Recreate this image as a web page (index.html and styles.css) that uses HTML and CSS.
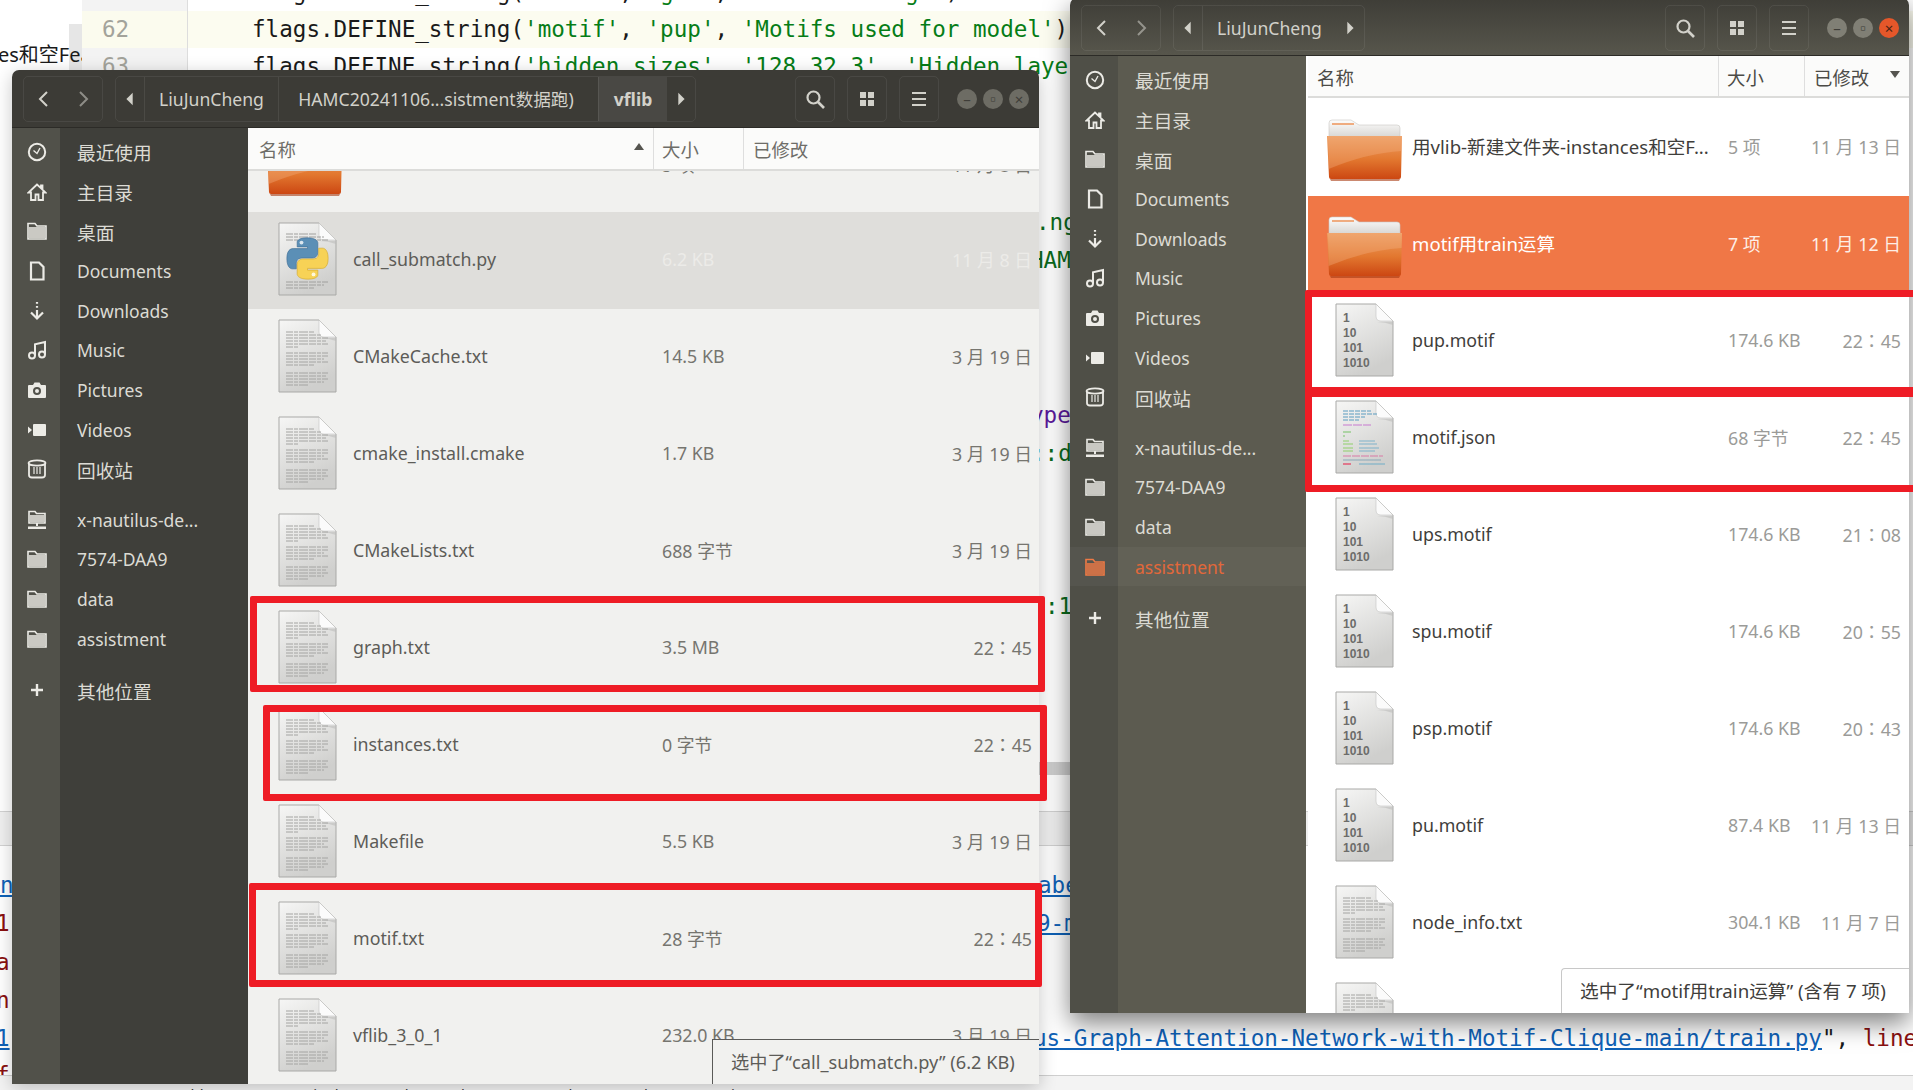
FILE: index.html
```html
<!DOCTYPE html>
<html>

<head>
  <title>Files</title>
  <link rel="stylesheet" href="styles.css">
</head>

<body>
  <svg class="defs" width="0" height="0">
    <defs>
      <linearGradient id="page" x1="0" y1="0" x2="0.4" y2="1">
        <stop offset="0" stop-color="#f6f6f5" />
        <stop offset="1" stop-color="#cfcfcd" />
      </linearGradient>
      <linearGradient id="orange" x1="0" y1="0" x2="0" y2="1">
        <stop offset="0" stop-color="#ee9f63" />
        <stop offset="0.55" stop-color="#e2772f" />
        <stop offset="1" stop-color="#cc4712" />
      </linearGradient>
      <linearGradient id="tab" x1="0" y1="0" x2="0" y2="1">
        <stop offset="0" stop-color="#fdfdfd" />
        <stop offset="1" stop-color="#d4d2ce" />
      </linearGradient>

      <symbol id="page-base" viewBox="0 0 59 74">
        <path d="M1 1H41L58 18V73H1Z" fill="url(#page)" stroke="#a9a9a7" />
        <path d="M41 1V13Q41 18 46 18H58Z" fill="#fbfbfb" stroke="#c4c4c2" stroke-width="0.6" />
        <path d="M42 19H58V22Q50 19 42 19Z" fill="#bdbdbb" opacity="0.6" />
      </symbol>
      <symbol id="f-text" viewBox="0 0 59 74">
        <use href="#page-base" width="59" height="74" />
        <path d="M8 13H36M8 16H44M8 19H50M8 22H48M8 25H50M8 28H20M8 34H50M8 37H50M8 40H46M8 43H50M8 46H36M8 54H50M8 57H48M8 60H50M8 63H46M8 66H30" stroke="#a4a4a2" stroke-width="1" stroke-dasharray="7 1 4 1 9 1" fill="none" />
      </symbol>
      <symbol id="f-python" viewBox="0 0 59 74">
        <use href="#page-base" width="59" height="74" />
        <path d="M8 12H38M8 15H46M8 18H50M8 60H50M8 63H46M8 66H36" stroke="#a0a09e" stroke-width="1" stroke-dasharray="7 1 4 1 9 1" fill="none" />
        <g transform="translate(8 15) scale(0.43)">
          <path d="M49 2C25 2 26 12 26 12V23H50V27H17C17 27 2 25 2 50C2 75 15 74 15 74H24V62C24 62 23 49 37 49H61C61 49 74 49 74 36V15C74 15 76 2 49 2Z" fill="#5b8fb6" stroke="#3f6f95" stroke-width="1.5" />
          <circle cx="36" cy="13" r="4.5" fill="#dbe6ee" />
          <g transform="rotate(180 50 50)">
            <path d="M49 2C25 2 26 12 26 12V23H50V27H17C17 27 2 25 2 50C2 75 15 74 15 74H24V62C24 62 23 49 37 49H61C61 49 74 49 74 36V15C74 15 76 2 49 2Z" fill="#f7d256" stroke="#d3a92c" stroke-width="1.5" />
            <circle cx="36" cy="13" r="4.5" fill="#fff8dc" />
          </g>
        </g>
      </symbol>
      <symbol id="f-binary" viewBox="0 0 59 74">
        <use href="#page-base" width="59" height="74" />
        <text class="bin" x="8" y="19">1</text>
        <text class="bin" x="8" y="34">10</text>
        <text class="bin" x="8" y="49">101</text>
        <text class="bin" x="8" y="64">1010</text>
      </symbol>
      <symbol id="f-json" viewBox="0 0 59 74">
        <use href="#page-base" width="59" height="74" />
        <path d="M8 11H36M8 14H42M8 17H30M8 20H24" stroke="#5a9cc0" stroke-width="1.2" stroke-dasharray="5 1" fill="none" />
        <path d="M8 25H36" stroke="#c77bd0" stroke-width="1.2" stroke-dasharray="9 1" fill="none" />
        <path d="M8 32H16M8 36H10" stroke="#76c266" stroke-width="1.2" fill="none" />
        <path d="M8 41H14M8 44H18M8 48H18M8 51H18" stroke="#8fcf6a" stroke-width="1.2" fill="none" />
        <path d="M24 41H40M24 44H42M24 48H44M24 51H40" stroke="#7fb2c9" stroke-width="1.2" fill="none" />
        <path d="M8 56H48" stroke="#d97aa5" stroke-width="1.2" stroke-dasharray="8 1" fill="none" />
        <path d="M8 60H46" stroke="#8aa8b8" stroke-width="1.2" fill="none" />
        <path d="M8 64H16" stroke="#e2506e" stroke-width="1.4" fill="none" />
        <path d="M24 64H50" stroke="#7fb2c9" stroke-width="1.2" fill="none" />
      </symbol>
      <symbol id="f-folder" viewBox="0 0 76 62">
        <path d="M2 4Q2 1 5 1H24L32 6H70Q73 6 73 9V20H2Z" fill="url(#tab)" stroke="#c9c7c3" stroke-width="0.6" />
        <path d="M5 5H27" stroke="#ee9a63" stroke-width="1.6" />
        <path d="M0 17H75L74 58Q74 60 72 60H4Q2 60 2 58Z" fill="url(#orange)" />
        <path d="M1 17H75L74.6 32Q40 34 1.6 50Z" fill="#f4b183" opacity="0.35" />
        <path d="M3 60H73L72 62H4Z" fill="#a83a10" opacity="0.6" />
      </symbol>

      <symbol id="i-clock" viewBox="0 0 20 20">
        <circle cx="10" cy="10" r="8.2" fill="none" stroke="currentColor" stroke-width="2" />
        <path d="M6.5 8.5L10 11.5L13 6" fill="none" stroke="currentColor" stroke-width="1.4" />
      </symbol>
      <symbol id="i-home" viewBox="0 0 20 20">
        <path d="M10 2.5L1.5 10.5H4V18H8.5V12.5H11.5V18H16V10.5H18.5L15.5 7.7V3.5H14V6.2Z" fill="none" stroke="currentColor" stroke-width="1.8" />
      </symbol>
      <symbol id="i-folder" viewBox="0 0 20 20">
        <path d="M1 2.5H8L10 5H19V18H1Z" fill="none" stroke="currentColor" stroke-width="1.6" />
        <rect x="2" y="6" width="16" height="11" fill="currentColor" opacity="0.78" />
      </symbol>
      <symbol id="i-doc" viewBox="0 0 20 20">
        <path d="M4 1.5H12L16.5 6V18.5H4Z" fill="none" stroke="currentColor" stroke-width="2.2" />
      </symbol>
      <symbol id="i-down" viewBox="0 0 20 20">
        <path d="M10 1V2.8M10 5V6.8M10 9V16" stroke="currentColor" stroke-width="2.2" fill="none" />
        <path d="M4 11.5L10 17.5L16 11.5" stroke="currentColor" stroke-width="2.2" fill="none" />
      </symbol>
      <symbol id="i-music" viewBox="0 0 20 20">
        <circle cx="5" cy="15.5" r="3" fill="none" stroke="currentColor" stroke-width="2" />
        <circle cx="15" cy="14.5" r="3" fill="none" stroke="currentColor" stroke-width="2" />
        <path d="M8 15.5V4.2L18 2V14.5" fill="none" stroke="currentColor" stroke-width="2" />
      </symbol>
      <symbol id="i-camera" viewBox="0 0 20 20">
        <path fill-rule="evenodd" d="M2 5H6L7.5 2.5H12.5L14 5H18Q19 5 19 6V17Q19 18 18 18H2Q1 18 1 17V6Q1 5 2 5ZM10 7A4 4 0 1 0 10 15A4 4 0 1 0 10 7ZM10 9A2 2 0 1 1 10 13A2 2 0 1 1 10 9Z" fill="currentColor" />
      </symbol>
      <symbol id="i-video" viewBox="0 0 20 20">
        <rect x="6" y="4" width="13" height="12" rx="1" fill="currentColor" />
        <path d="M1 6.5L5 10L1 13.5Z" fill="currentColor" />
      </symbol>
      <symbol id="i-trash" viewBox="0 0 20 20">
        <ellipse cx="10" cy="4" rx="8.5" ry="2.6" fill="none" stroke="currentColor" stroke-width="1.8" />
        <path d="M2 4.5V16Q2 18.5 5 18.5H15Q18 18.5 18 16V4.5" fill="none" stroke="currentColor" stroke-width="1.8" />
        <path d="M7 8V15M10 8V15M13 8V15" stroke="currentColor" stroke-width="1.2" fill="none" />
      </symbol>
      <symbol id="i-drive" viewBox="0 0 20 20">
        <path d="M2 1.5H8L9.5 3.5H18V13H2Z" fill="none" stroke="currentColor" stroke-width="1.6" />
        <rect x="3" y="5" width="14" height="7" fill="currentColor" opacity="0.78" />
        <path d="M10 13V16" stroke="currentColor" stroke-width="2" />
        <rect x="1" y="16.5" width="18" height="2.5" fill="currentColor" />
      </symbol>
      <symbol id="i-plus" viewBox="0 0 20 20">
        <path d="M10 4V16M4 10H16" stroke="currentColor" stroke-width="2.4" fill="none" />
      </symbol>
      <symbol id="i-back" viewBox="0 0 20 20">
        <path d="M13 3L6 10L13 17" stroke="currentColor" stroke-width="2" fill="none" />
      </symbol>
      <symbol id="i-next" viewBox="0 0 20 20">
        <path d="M7 3L14 10L7 17" stroke="currentColor" stroke-width="2" fill="none" />
      </symbol>
      <symbol id="i-tri-l" viewBox="0 0 20 20">
        <path d="M13 3V17L6 10Z" fill="currentColor" />
      </symbol>
      <symbol id="i-tri-r" viewBox="0 0 20 20">
        <path d="M7 3V17L14 10Z" fill="currentColor" />
      </symbol>
      <symbol id="i-search" viewBox="0 0 20 20">
        <circle cx="8.5" cy="8.5" r="6" fill="none" stroke="currentColor" stroke-width="2.2" />
        <path d="M13 13L19 19" stroke="currentColor" stroke-width="2.6" />
      </symbol>
      <symbol id="i-grid" viewBox="0 0 20 20">
        <path d="M3 3H9V9H3ZM11 3H17V9H11ZM3 11H9V17H3ZM11 11H17V17H11Z" fill="currentColor" />
      </symbol>
      <symbol id="i-menu" viewBox="0 0 20 20">
        <path d="M3 4H17M3 10H17M3 16H17" stroke="currentColor" stroke-width="2.2" />
      </symbol>
    </defs>
  </svg>

  <div class="desktop">

    <!-- IDE behind the two file windows -->
    <div class="ide">
      <div class="tree-rail"></div>
      <div class="tree-label">es和空Fea</div>
      <div class="code">
        <div class="code-line"><span class="gutter">61</span><span class="src">flags.DEFINE_string(<em>'model'</em>, <em>'gat'</em>, <em>'Model string.'</em>)</span></div>
        <div class="code-line current"><span class="gutter">62</span><span class="src">flags.DEFINE_string(<em>'motif'</em>, <em>'pup'</em>, <em>'Motifs used for model'</em>)</span></div>
        <div class="code-line"><span class="gutter">63</span><span class="src">flags.DEFINE_string(<em>'hidden_sizes'</em>, <em>'128,32,3'</em>, <em>'Hidden layers'</em>)</span></div>
      </div>
      <span class="scrap green s-ng">.ng</span>
      <span class="scrap green s-ham">HAM</span>
      <span class="scrap purple s-ype">ype</span>
      <span class="scrap green s-cd">::d</span>
      <span class="scrap green s-c1">:1</span>
      <div class="console-split"></div>
      <div class="console-head"></div>
      <span class="scrap link s-abe">abe</span>
      <span class="scrap link s-9m">9-m</span>
      <span class="scrap link s-n1">n</span>
      <span class="scrap red s-r1">1</span>
      <span class="scrap red s-ra">a</span>
      <span class="scrap red s-rn">n</span>
      <span class="scrap link s-n2">1</span>
      <span class="scrap red s-rf">f</span>
      <span class="scrap s-path"><u class="link">us-Graph-Attention-Network-with-Motif-Clique-main/train.py</u>", <span class="red">line</span></span>
      <div class="tool-strip">
        <span>TODO</span><span>Problems</span><span>Terminal</span><span>Python Packages</span><span>Python Console</span><span>Services</span>
      </div>
    </div>

    <!-- left window -->
    <section class="win win-left">
      <header class="win-head">
        <div class="hgroup nav-group">
          <button class="hbtn nav"><svg><use href="#i-back" /></svg></button>
          <button class="hbtn nav dim"><svg><use href="#i-next" /></svg></button>
        </div>
        <div class="hgroup path-group">
          <button class="hbtn tri"><svg><use href="#i-tri-l" /></svg></button>
          <button class="crumb c-home">LiuJunCheng</button>
          <button class="crumb c-long">HAMC20241106...sistment数据跑)</button>
          <button class="crumb c-cur">vflib</button>
          <button class="hbtn tri"><svg><use href="#i-tri-r" /></svg></button>
        </div>
        <div class="tools">
          <button class="tool"><svg><use href="#i-search" /></svg></button>
          <button class="tool"><svg><use href="#i-grid" /></svg></button>
          <button class="tool"><svg><use href="#i-menu" /></svg></button>
        </div>
        <div class="wm">
          <span class="wm-btn">–</span><span class="wm-btn">▫</span><span class="wm-btn">×</span>
        </div>
      </header>
      <div class="win-body">
        <nav class="side">
          <a class="side-item"><svg><use href="#i-clock" /></svg><span class="cjk">最近使用</span></a>
          <a class="side-item"><svg><use href="#i-home" /></svg><span class="cjk">主目录</span></a>
          <a class="side-item"><svg><use href="#i-folder" /></svg><span class="cjk">桌面</span></a>
          <a class="side-item"><svg><use href="#i-doc" /></svg><span>Documents</span></a>
          <a class="side-item"><svg><use href="#i-down" /></svg><span>Downloads</span></a>
          <a class="side-item"><svg><use href="#i-music" /></svg><span>Music</span></a>
          <a class="side-item"><svg><use href="#i-camera" /></svg><span>Pictures</span></a>
          <a class="side-item"><svg><use href="#i-video" /></svg><span>Videos</span></a>
          <a class="side-item"><svg><use href="#i-trash" /></svg><span class="cjk">回收站</span></a>
          <a class="side-item gap"><svg><use href="#i-drive" /></svg><span>x-nautilus-de...</span></a>
          <a class="side-item"><svg><use href="#i-folder" /></svg><span>7574-DAA9</span></a>
          <a class="side-item"><svg><use href="#i-folder" /></svg><span>data</span></a>
          <a class="side-item"><svg><use href="#i-folder" /></svg><span>assistment</span></a>
          <a class="side-item gap-end"><svg><use href="#i-plus" /></svg><span class="cjk">其他位置</span></a>
        </nav>
        <div class="list">
          <div class="list-head">
            <div class="col col-name">名称<i class="sort up"></i></div>
            <div class="col col-size">大小</div>
            <div class="col col-date">已修改</div>
          </div>
          <div class="row clipped">
            <svg class="folder"><use href="#f-folder" /></svg><span class="name"></span><span class="size">5 项</span><span class="date">11 月 8 日</span>
          </div>
          <div class="row selected">
            <svg class="file"><use href="#f-python" /></svg><span class="name">call_submatch.py</span><span class="size">6.2 KB</span><span class="date">11 月 8 日</span>
          </div>
          <div class="row"><svg class="file"><use href="#f-text" /></svg><span class="name">CMakeCache.txt</span><span class="size">14.5 KB</span><span class="date">3 月 19 日</span></div>
          <div class="row"><svg class="file"><use href="#f-text" /></svg><span class="name">cmake_install.cmake</span><span class="size">1.7 KB</span><span class="date">3 月 19 日</span></div>
          <div class="row"><svg class="file"><use href="#f-text" /></svg><span class="name">CMakeLists.txt</span><span class="size">688 字节</span><span class="date">3 月 19 日</span></div>
          <div class="row"><svg class="file"><use href="#f-text" /></svg><span class="name">graph.txt</span><span class="size">3.5 MB</span><span class="date time">22：45</span></div>
          <div class="row"><svg class="file"><use href="#f-text" /></svg><span class="name">instances.txt</span><span class="size">0 字节</span><span class="date time">22：45</span></div>
          <div class="row"><svg class="file"><use href="#f-text" /></svg><span class="name">Makefile</span><span class="size">5.5 KB</span><span class="date">3 月 19 日</span></div>
          <div class="row"><svg class="file"><use href="#f-text" /></svg><span class="name">motif.txt</span><span class="size">28 字节</span><span class="date time">22：45</span></div>
          <div class="row"><svg class="file"><use href="#f-text" /></svg><span class="name">vflib_3_0_1</span><span class="size">232.0 KB</span><span class="date">3 月 19 日</span></div>
          <div class="status">选中了“call_submatch.py” (6.2 KB)</div>
        </div>
      </div>
    </section>

    <!-- right window -->
    <section class="win win-right">
      <header class="win-head">
        <div class="hgroup nav-group">
          <button class="hbtn nav"><svg><use href="#i-back" /></svg></button>
          <button class="hbtn nav dim"><svg><use href="#i-next" /></svg></button>
        </div>
        <div class="hgroup path-group">
          <button class="hbtn tri"><svg><use href="#i-tri-l" /></svg></button>
          <button class="crumb c-home">LiuJunCheng</button>
          <button class="hbtn tri"><svg><use href="#i-tri-r" /></svg></button>
        </div>
        <div class="tools">
          <button class="tool"><svg><use href="#i-search" /></svg></button>
          <button class="tool"><svg><use href="#i-grid" /></svg></button>
          <button class="tool"><svg><use href="#i-menu" /></svg></button>
        </div>
        <div class="wm">
          <span class="wm-btn">–</span><span class="wm-btn">▫</span><span class="wm-btn close">×</span>
        </div>
      </header>
      <div class="win-body">
        <nav class="side">
          <a class="side-item"><svg><use href="#i-clock" /></svg><span class="cjk">最近使用</span></a>
          <a class="side-item"><svg><use href="#i-home" /></svg><span class="cjk">主目录</span></a>
          <a class="side-item"><svg><use href="#i-folder" /></svg><span class="cjk">桌面</span></a>
          <a class="side-item"><svg><use href="#i-doc" /></svg><span>Documents</span></a>
          <a class="side-item"><svg><use href="#i-down" /></svg><span>Downloads</span></a>
          <a class="side-item"><svg><use href="#i-music" /></svg><span>Music</span></a>
          <a class="side-item"><svg><use href="#i-camera" /></svg><span>Pictures</span></a>
          <a class="side-item"><svg><use href="#i-video" /></svg><span>Videos</span></a>
          <a class="side-item"><svg><use href="#i-trash" /></svg><span class="cjk">回收站</span></a>
          <a class="side-item gap"><svg><use href="#i-drive" /></svg><span>x-nautilus-de...</span></a>
          <a class="side-item"><svg><use href="#i-folder" /></svg><span>7574-DAA9</span></a>
          <a class="side-item"><svg><use href="#i-folder" /></svg><span>data</span></a>
          <a class="side-item active"><svg><use href="#i-folder" /></svg><span>assistment</span></a>
          <a class="side-item gap-end"><svg><use href="#i-plus" /></svg><span class="cjk">其他位置</span></a>
        </nav>
        <div class="list">
          <div class="list-head">
            <div class="col col-name">名称</div>
            <div class="col col-size">大小</div>
            <div class="col col-date">已修改<i class="sort"></i></div>
          </div>
          <div class="row"><svg class="folder"><use href="#f-folder" /></svg><span class="name wide">用vlib-新建文件夹-instances和空F...</span><span class="size">5 项</span><span class="date">11 月 13 日</span></div>
          <div class="row selected"><svg class="folder"><use href="#f-folder" /></svg><span class="name wide">motif用train运算</span><span class="size">7 项</span><span class="date">11 月 12 日</span></div>
          <div class="row"><svg class="file"><use href="#f-binary" /></svg><span class="name">pup.motif</span><span class="size">174.6 KB</span><span class="date time">22：45</span></div>
          <div class="row"><svg class="file"><use href="#f-json" /></svg><span class="name">motif.json</span><span class="size">68 字节</span><span class="date time">22：45</span></div>
          <div class="row"><svg class="file"><use href="#f-binary" /></svg><span class="name">ups.motif</span><span class="size">174.6 KB</span><span class="date time">21：08</span></div>
          <div class="row"><svg class="file"><use href="#f-binary" /></svg><span class="name">spu.motif</span><span class="size">174.6 KB</span><span class="date time">20：55</span></div>
          <div class="row"><svg class="file"><use href="#f-binary" /></svg><span class="name">psp.motif</span><span class="size">174.6 KB</span><span class="date time">20：43</span></div>
          <div class="row"><svg class="file"><use href="#f-binary" /></svg><span class="name">pu.motif</span><span class="size">87.4 KB</span><span class="date">11 月 13 日</span></div>
          <div class="row"><svg class="file"><use href="#f-text" /></svg><span class="name">node_info.txt</span><span class="size">304.1 KB</span><span class="date">11 月 7 日</span></div>
          <div class="row"><svg class="file"><use href="#f-text" /></svg></div>
          <div class="status">选中了“motif用train运算” (含有 7 项)</div>
        </div>
      </div>
    </section>

    <!-- red boxes drawn on the screenshot -->
    <div class="mark m-graph"></div>
    <div class="mark m-inst"></div>
    <div class="mark m-motif"></div>
    <div class="mark m-pup"></div>
    <div class="mark m-json"></div>
  </div>
</body>

</html>
```

FILE: styles.css
```css
html, body {
  margin: 0;
  height: 100%;
  overflow: hidden;
  background: #fff;
}

.defs {
  position: absolute;
}

.desktop {
  position: relative;
  width: 1913px;
  height: 1090px;
  overflow: hidden;
  font-family: "Noto Sans", "Noto Sans CJK SC", sans-serif;
}

/* IDE in the background */
.ide {
  position: absolute;
  inset: 0;
  background: #fff;
  font-family: "DejaVu Sans Mono", "Noto Sans CJK SC", monospace;
  font-size: 22.6px;
  color: #1a1a1a;
}

.tree-rail {
  position: absolute;
  left: 69px;
  top: 24px;
  width: 13px;
  height: 46px;
  background: #e6e6e6;
}

.tree-label {
  position: absolute;
  left: -2px;
  top: 40px;
  font-family: "Noto Sans", "Noto Sans CJK SC", sans-serif;
  font-size: 20px;
  line-height: 30px;
  width: 84px;
  overflow: hidden;
  white-space: nowrap;
}

.code {
  position: absolute;
  left: 82px;
  right: 0;
  top: -26px;
}

.code-line {
  display: flex;
  height: 37px;
  line-height: 37px;
  white-space: pre;
}

.code-line.current {
  background: #fcfcf0;
}

.gutter {
  width: 106px;
  box-sizing: border-box;
  padding-left: 20px;
  background: #f3f3f3;
  border-right: 1px solid #ddd;
  color: #a3a39b;
}

.current .gutter {
  background: #fbfbee;
}

.src {
  padding-left: 64px;
}

.src em {
  font-style: normal;
  color: #067d17;
}

.scrap {
  position: absolute;
  line-height: 30px;
  white-space: pre;
}

.green { color: #0b6b1c; }
.purple { color: #5c1a9c; }
.red { color: #8a1010; }
.link { color: #0f62b8; text-decoration: underline; }

.s-ng { left: 1036px; top: 207px; }
.s-ham { left: 1030px; top: 245px; }
.s-ype { left: 1030px; top: 400px; }
.s-cd { left: 1031px; top: 438px; }
.s-c1 { left: 1045px; top: 591px; }
.s-abe { left: 1038px; top: 870px; }
.s-9m { left: 1037px; top: 908px; }
.s-n1 { left: 0; top: 870px; }
.s-r1 { left: -4px; top: 908px; }
.s-ra { left: -4px; top: 947px; }
.s-rn { left: -4px; top: 985px; }
.s-n2 { left: -4px; top: 1023px; }
.s-rf { left: -4px; top: 1060px; }
.s-path { left: 1033px; top: 1023px; }

.console-split {
  position: absolute;
  left: 1039px;
  width: 31px;
  top: 762px;
  height: 13px;
  background: #cfcfcf;
}

.console-head {
  position: absolute;
  left: 0;
  right: 0;
  top: 811px;
  height: 33px;
  background: #f0f0f0;
  border-top: 1px solid #d2d2d2;
  border-bottom: 1px solid #d2d2d2;
}

.tool-strip {
  position: absolute;
  left: 0;
  right: 0;
  top: 1075px;
  height: 15px;
  box-sizing: border-box;
  padding: 8px 0 0 80px;
  display: flex;
  gap: 44px;
  background: #f3f3f3;
  border-top: 1px solid #cfcfcf;
  font-family: "Noto Sans", sans-serif;
  font-size: 15px;
  line-height: 20px;
  color: #333;
  overflow: hidden;
}

/* file manager windows */
.win {
  position: absolute;
  display: flex;
  flex-direction: column;
  overflow: hidden;
  border-radius: 7px 7px 0 0;
  color: #e4e3dd;
}

.win-left {
  left: 12px;
  top: 70px;
  width: 1027px;
  height: 1014px;
  --head: #3c3b36;
  --strip: #51514a;
  --panel: #3f3f3a;
  box-shadow: 0 4px 18px rgba(0, 0, 0, 0.22);
}

.win-right {
  left: 1070px;
  top: -2px;
  width: 839px;
  height: 1015px;
  --head: #4a4940;
  --strip: #4f4f47;
  --panel: #5c5b50;
  box-shadow: 0 10px 26px rgba(0, 0, 0, 0.5);
}

.win-head {
  display: flex;
  align-items: center;
  flex: none;
  height: 58px;
  box-sizing: border-box;
  background: var(--head);
  border-bottom: 1px solid #2c2b27;
  padding-left: 11px;
  font-size: 17.6px;
  color: #d2d1ca;
}

.win-right .win-head {
  background: linear-gradient(#3e3d37, #57564c);
  padding-top: 2px;
}

.win button {
  font: inherit;
  color: inherit;
  background: none;
  border: 0;
  padding: 0;
}

.hgroup {
  display: flex;
  height: 46px;
  border: 1px solid rgba(255, 255, 255, 0.07);
  border-radius: 5px;
  box-sizing: border-box;
}

.nav-group {
  margin-right: 12px;
}

.hbtn {
  display: flex;
  align-items: center;
  justify-content: center;
}

.hbtn svg {
  width: 20px;
  height: 20px;
}

.nav {
  width: 39px;
}

.nav.dim {
  opacity: 0.55;
}

.tri {
  width: 28px;
}

.tri svg {
  width: 18px;
  height: 18px;
}

.crumb {
  border-left: 1px solid rgba(255, 255, 255, 0.08) !important;
  white-space: nowrap;
  text-align: center;
}

.c-home { width: 134px; }
.c-long { width: 320px; padding-right: 5px !important; }
.c-cur {
  width: 69px;
  font-weight: 700 !important;
  background: rgba(255, 255, 255, 0.07) !important;
}

.tools {
  display: flex;
  gap: 12px;
  margin-left: auto;
}

.tool {
  display: flex;
  align-items: center;
  justify-content: center;
  width: 40px;
  height: 46px;
  border: 1px solid rgba(255, 255, 255, 0.07) !important;
  border-radius: 5px;
  box-sizing: border-box;
}

.tool svg {
  width: 20px;
  height: 20px;
}

.wm {
  display: flex;
  gap: 6px;
  margin: 0 10px 0 18px;
}

.wm-btn {
  width: 20px;
  height: 20px;
  border-radius: 50%;
  background: #6d6c64;
  color: #3e3d38;
  font-size: 15px;
  line-height: 20px;
  text-align: center;
}

.win-right .wm-btn {
  background: #807f75;
}

.win-right .wm-btn.close {
  background: #e5572a;
  color: #4a2414;
}

.win-body {
  display: flex;
  flex: 1;
  min-height: 0;
}

.side {
  flex: none;
  width: 236px;
  box-sizing: border-box;
  padding-top: 4px;
  background: linear-gradient(90deg, var(--strip) 48px, var(--panel) 48px);
  font-size: 17.5px;
  color: #dcdbd4;
}

.side-item {
  display: flex;
  align-items: center;
  height: 39.7px;
}

.side-item.gap {
  margin-top: 10.5px;
}

.side-item.gap-end {
  margin-top: 12px;
}

.side-item .cjk {
  font-size: 18.7px;
}

.side-item svg {
  width: 20px;
  height: 20px;
  margin: 0 30px 0 15px;
  color: #ecebe6;
}

.side-item.active {
  background: rgba(255, 255, 255, 0.04);
  color: #e2683a;
}

.side-item.active svg {
  color: #ef7a45;
}

.list {
  position: relative;
  flex: 1;
  min-width: 0;
  overflow: hidden;
  background: var(--list);
  color: var(--name);
  font-size: 17.8px;
}

.win-left .list {
  --list: #f1f1ef;
  --name: #5d5c58;
  --meta: #76756f;
}

.win-right .list {
  margin-left: 2px;
  --list: #fff;
  --name: #3f3e3b;
  --meta: #9b9b98;
}

.list-head {
  display: flex;
  height: 43px;
  box-sizing: border-box;
  background: #fbfbfa;
  border-bottom: 2px solid #dcdcda;
  color: #6e6d68;
  font-size: 18.4px;
  line-height: 44px;
}

.win-right .list-head {
  height: 42px;
  color: #4c4b47;
  margin-bottom: 1px;
}

.col {
  position: relative;
  box-sizing: border-box;
  padding-left: 9px;
  border-right: 1px solid #dedede;
}

.win-left .col-name { width: 406px; padding-left: 11px; }
.win-left .col-size { width: 90px; padding-left: 8px; }
.win-right .col-name { width: 411px; padding-left: 9px; }
.win-right .col-size { width: 86px; padding-left: 8px; }
.col-date { flex: 1; border-right: 0; }

.sort {
  position: absolute;
  right: 9px;
  top: 15px;
  border: 5px solid transparent;
  border-top: 7px solid #55544f;
  border-bottom: 0;
}

.sort.up {
  border-top: 0;
  border-bottom: 7px solid #55544f;
}

.row {
  display: grid;
  align-items: center;
  height: 97px;
  box-sizing: border-box;
  padding-right: 7px;
  padding-bottom: 3px;
  white-space: nowrap;
}

.win-left .row { grid-template-columns: 105px 309px 1fr auto; }
.win-right .row { grid-template-columns: 104px 316px 1fr auto; padding-right: 8px; padding-bottom: 4px; }

.row svg {
  display: block;
}

.name.wide {
  font-size: 18.6px;
}

.file {
  width: 59px;
  height: 74px;
}

.bin {
  font-family: "Liberation Sans", sans-serif;
  font-weight: 700;
  font-size: 12px;
  fill: #6c6c6a;
}

.win-left .file { margin-left: 30px; }
.win-right .file { margin-left: 27px; }

.folder {
  width: 76px;
  height: 62px;
  margin-left: 19px;
  margin-top: 8px;
}

.size, .date {
  color: var(--meta);
}

.date.time {
  font-family: "Noto Sans", "Noto Sans CJK TC", sans-serif;
}

.row.clipped {
  height: 41px;
  padding-bottom: 0;
  overflow: hidden;
  align-items: start;
}

.row.clipped .folder {
  margin-top: -37px;
}

.row.clipped .size, .row.clipped .date {
  margin-top: -20px;
}

.win-left .row.selected {
  background: #dfdedb;
}

.win-left .row.selected .size, .win-left .row.selected .date {
  color: #ecebe8;
}

.win-right .row.selected {
  background: #f07746;
  color: #fff;
}

.win-right .row.selected .size, .win-right .row.selected .date {
  color: #fdeee6;
}

.status {
  position: absolute;
  right: 0;
  bottom: 0;
  height: 45px;
  box-sizing: border-box;
  padding-right: 8px;
  line-height: 44px;
  white-space: nowrap;
}

.win-left .status {
  width: 327px;
  padding-left: 18px;
  font-size: 18.2px;
  background: #f1f1ef;
  border-top: 1px solid #5a5a58;
  border-left: 1px solid #5a5a58;
}

.win-right .status {
  width: 348px;
  padding-left: 18px;
  font-size: 18.7px;
  background: #fff;
  border-top: 1px solid #c8c8c8;
  border-left: 1px solid #c8c8c8;
  border-radius: 4px 0 0 0;
  color: #3f3e3b;
}

/* red annotations */
.mark {
  position: absolute;
  box-sizing: border-box;
  border: 7px solid #ee1c25;
  border-radius: 2px;
}

.m-graph { left: 250px; top: 596px; width: 795px; height: 96px; }
.m-inst { left: 263px; top: 705px; width: 784px; height: 96px; }
.m-motif { left: 249px; top: 883px; width: 793px; height: 104px; }
.m-pup { left: 1305px; top: 290px; width: 620px; height: 104px; }
.m-json { left: 1305px; top: 390px; width: 620px; height: 102px; }
```
